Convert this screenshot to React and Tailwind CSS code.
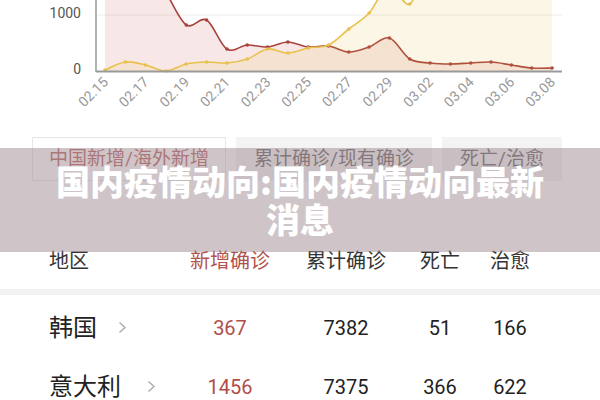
import React from 'react';

const CJK = { fontFamily: "Roboto, 'Noto Sans CJK SC', sans-serif" };

// screen-space y for each day (02.15 .. 03.08), negatives run above the visible top
const redY = [-90, -70, -45, -8, 25, 20, 49, 45, 47, 42, 47, 46, 52, 47, 38, 59, 63, 64, 63, 62, 65, 68, 68];
const yellowY = [70, 62, 65, 71, 64, 62, 63, 59, 49, 53, 48, 45, 29, 13, -15, 4, -40, -60, -60, -60, -60, -60, -60];
const labels = ['02.15', '02.17', '02.19', '02.21', '02.23', '02.25', '02.27', '02.29', '03.02', '03.04', '03.06', '03.08'];

const X0 = 105;
const STEP = (552 - 105) / 22;
const BASE = 71;

const toPts = (ys) => ys.map((y, i) => [X0 + i * STEP, y]);

function smoothPath(pts) {
  let d = `M${pts[0][0]},${pts[0][1]}`;
  for (let i = 0; i < pts.length - 1; i++) {
    const p0 = pts[i - 1] || pts[i];
    const p1 = pts[i];
    const p2 = pts[i + 1];
    const p3 = pts[i + 2] || p2;
    const c1x = p1[0] + (p2[0] - p0[0]) / 6;
    const c1y = p1[1] + (p2[1] - p0[1]) / 6;
    const c2x = p2[0] - (p3[0] - p1[0]) / 6;
    const c2y = p2[1] - (p3[1] - p1[1]) / 6;
    d += ` C${c1x},${c1y} ${c2x},${c2y} ${p2[0]},${p2[1]}`;
  }
  return d;
}

function Series({ ys, color, fill }) {
  const pts = toPts(ys);
  const line = smoothPath(pts);
  const last = pts[pts.length - 1];
  const area = `${line} L${last[0]},${BASE} L${pts[0][0]},${BASE} Z`;
  return (
    <g>
      <path d={area} fill={fill} fillOpacity="0.13" />
      <path d={line} fill="none" stroke={color} strokeWidth="1.6" />
      {pts.filter((p) => p[1] >= 0).map((p, i) => (
        <circle key={i} cx={p[0]} cy={p[1]} r="1.8" fill={color} />
      ))}
    </g>
  );
}

function TrendChart() {
  return (
    <svg width="600" height="120" className="block" style={CJK}>
      <line x1="97" y1="15" x2="562" y2="15" stroke="#ececec" strokeWidth="1" />
      <Series ys={redY} color="#a8423e" fill="#c25046" />
      <Series ys={yellowY} color="#e9c04c" fill="#ebb93c" />
      <line x1="96" y1="0" x2="96" y2="72" stroke="#9a9a9a" strokeWidth="1.5" />
      <line x1="96" y1="71.5" x2="562" y2="71.5" stroke="#9a9a9a" strokeWidth="2" />
      <text x="81" y="18" textAnchor="end" fontSize="14" fill="#555">1000</text>
      <text x="81" y="74" textAnchor="end" fontSize="14" fill="#555">0</text>
      {labels.map((t, k) => {
        const x = X0 + k * 2 * STEP + 4;
        return (
          <text key={t} x={x} y="83" textAnchor="end" fontSize="14" fill="#999" transform={`rotate(-45 ${x} 83)`}>
            {t}
          </text>
        );
      })}
    </svg>
  );
}

function Chevron() {
  return (
    <svg width="9" height="13" viewBox="0 0 9 13" className="shrink-0">
      <polyline points="1.5,1.5 7,6.5 1.5,11.5" fill="none" stroke="#a8a8a8" strokeWidth="1.3" />
    </svg>
  );
}

const rows = [
  { name: '韩国', add: '367', total: '7382', dead: '51', cured: '166', gap: 'ml-[21px]' },
  { name: '意大利', add: '1456', total: '7375', dead: '366', cured: '622', gap: 'ml-[26px]' },
];

export default function App() {
  return (
    <div className="relative w-[600px] h-[400px] overflow-hidden bg-white text-[#333]" style={CJK}>
      <TrendChart />

      <div className="mt-[17px] flex gap-[10px] pl-[32px]">
        <div className="w-[194px] h-[44px] flex items-center justify-center border border-[#e6e6e6] bg-white text-[19px] text-[#b9605b]">
          中国新增/海外新增
        </div>
        <div className="w-[196px] h-[44px] flex items-center justify-center bg-[#f3f3f3] text-[19px] text-[#666]">
          累计确诊/现有确诊
        </div>
        <div className="w-[120px] h-[44px] flex items-center justify-center bg-[#f3f3f3] text-[19px] text-[#666]">
          死亡/治愈
        </div>
      </div>

      <div className="mt-[51px] h-[57px] flex items-center pl-[49px] text-[20px]">
        <div className="w-[131px]">地区</div>
        <div className="w-[100px] text-center text-[#b2524c]">新增确诊</div>
        <div className="w-[132px] text-center">累计确诊</div>
        <div className="w-[56px] text-center">死亡</div>
        <div className="w-[84px] text-center">治愈</div>
      </div>
      <div className="h-[6px] bg-[#f2f2f2]" />

      <div className="pt-[3px]">
        {rows.map((r) => (
          <div key={r.name} className="h-[59px] flex items-center pl-[49px] text-[20px] text-[#222]">
            <div className="w-[131px] flex items-center">
              <span className="text-[24px]">{r.name}</span>
              <span className={r.gap}><Chevron /></span>
            </div>
            <div className="w-[100px] text-center text-[#b04e48]">{r.add}</div>
            <div className="w-[132px] text-center">{r.total}</div>
            <div className="w-[56px] text-center">{r.dead}</div>
            <div className="w-[84px] text-center">{r.cured}</div>
          </div>
        ))}
      </div>

      {/* headline banner laid over the page */}
      <div className="absolute left-0 top-[148px] w-full h-[104px] bg-[#a08c92]/50 flex items-center justify-center px-[40px]">
        <h1 className="text-center text-white font-black text-[34px] leading-[38px]" style={{ fontFamily: "'Noto Sans CJK SC', sans-serif" }}>
          国内疫情动向:国内疫情动向最新消息
        </h1>
      </div>
    </div>
  );
}
